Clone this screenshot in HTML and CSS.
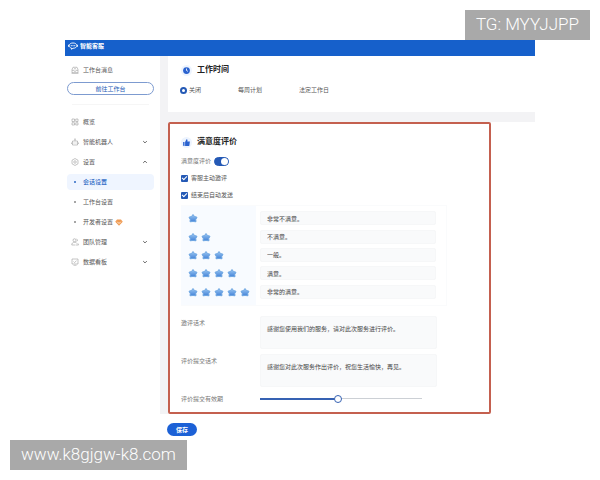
FILE: index.html
```html
<!DOCTYPE html>
<html lang="zh-CN">
<head>
    <meta charset="UTF-8">
    <meta name="viewport" content="width=device-width, initial-scale=1.0">
    <title>智能客服</title>
    <link rel="stylesheet" href="styles.css">
</head>
<body>
    <!-- shared icons -->
    <svg class="defs" width="0" height="0" aria-hidden="true">
        <defs>
            <linearGradient id="starFill" x1="0" y1="0" x2="0" y2="1">
                <stop offset="0" stop-color="#9cc8f3"/>
                <stop offset="1" stop-color="#4483d8"/>
            </linearGradient>
            <symbol id="star" viewBox="0 0 20 20">
                <path d="M10 3l3 4 5 1.500-2.500 4.500.500 4.500-6-.500-6 .500.500-4.500L2 8.500 7 7z" fill="url(#starFill)" stroke="#6ea6e2" stroke-width="2" stroke-linejoin="round"/>
            </symbol>
            <symbol id="down" viewBox="0 0 10 10">
                <path d="M2 3.500l3 3 3-3" fill="none" stroke="#555" stroke-width="1.500"/>
            </symbol>
        </defs>
    </svg>

    <div class="tag tag-top">TG: MYYJJPP</div>
    <div class="tag tag-bottom">www.k8gjgw-k8.com</div>

    <div class="app">
        <header class="topbar">
            <svg class="logo" viewBox="0 0 20 16"><path d="M10 2c4.500 0 7.500 2 7.500 5.300S14.500 12.500 10 12.500l-3 2v-2.300C4 11.500 2.500 9.800 2.500 7.300 2.500 4 5.500 2 10 2z" fill="none" stroke="#fff" stroke-width="1.800"/><path d="M1 5.500v4M19 5.500v4" stroke="#fff" stroke-width="1.800"/><circle cx="6.500" cy="7.300" r="1.100" fill="#fff"/><circle cx="10" cy="7.300" r="1.100" fill="#fff"/><circle cx="13.500" cy="7.300" r="1.100" fill="#fff"/></svg>
            <span>智能客服</span>
        </header>

        <div class="body">
            <!-- SIDEBAR -->
            <nav class="sidebar">
                <a class="item" href="#">
                    <svg class="icon" viewBox="0 0 16 16"><path d="M2 7l2-4.500h8L14 7v6.500H2zM2 8.500h3.500l1 2h3l1-2H14M6 5.500h4M1 14.500h14"/></svg>
                    <span>工作台消息</span>
                </a>
                <button class="go" type="button">前往工作台</button>
                <hr>
                <a class="item" href="#">
                    <svg class="icon" viewBox="0 0 16 16"><path d="M2 2h5v5H2zM9.500 2h4.500v5H9.500zM2 9.500h5V14H2zM9.500 9.500h4.500V14H9.500z"/></svg>
                    <span>概览</span>
                </a>
                <a class="item" href="#">
                    <svg class="icon" viewBox="0 0 16 16"><path d="M3 6h10v8H3zM8 6V2M6.500 2h3M1 9v3M15 9v3M6 9v2M10 9v2"/></svg>
                    <span>智能机器人</span>
                    <svg class="arrow"><use href="#down"/></svg>
                </a>
                <a class="item" href="#">
                    <svg class="icon" viewBox="0 0 16 16"><path d="M8 1l6 3.500v7L8 15l-6-3.500v-7z"/><circle cx="8" cy="8" r="2.500"/></svg>
                    <span>设置</span>
                    <svg class="arrow up"><use href="#down"/></svg>
                </a>
                <a class="item sub active" href="#"><span>会话设置</span></a>
                <a class="item sub" href="#"><span>工作台设置</span></a>
                <a class="item sub" href="#">
                    <span>开发者设置</span>
                    <svg class="gem" viewBox="0 0 16 14"><path d="M4 1h8l3.500 4.500L8 13.500.500 5.500z" fill="#ef9a52"/><path d="M4.500 5.500L8 9l3.500-3.500" fill="none" stroke="#fff" stroke-width="1.500"/></svg>
                </a>
                <a class="item" href="#">
                    <svg class="icon" viewBox="0 0 16 16"><circle cx="7" cy="4.500" r="3"/><path d="M1.500 14c0-3.500 2-5.500 5.500-5.500 2 0 3.500.800 4.500 2M1.500 14H9M11 2c2.500.500 2.500 4.500 0 5M10 14h5M13.500 10.500L15 14"/></svg>
                    <span>团队管理</span>
                    <svg class="arrow"><use href="#down"/></svg>
                </a>
                <a class="item" href="#">
                    <svg class="icon" viewBox="0 0 16 16"><path d="M2 2h12v10H2zM5 7l2 2 4-3.500M5 14.500h6"/></svg>
                    <span>数据看板</span>
                    <svg class="arrow"><use href="#down"/></svg>
                </a>
            </nav>

            <!-- SETTINGS -->
            <form class="content">
                <div class="panels">
                    <section class="card hours">
                        <h2>
                            <svg class="title-icon" viewBox="0 0 16 16"><circle cx="8" cy="8" r="6" fill="#2a62cf"/><path d="M8 4.500V8l2.500 1.500" fill="none" stroke="#fff" stroke-width="1.500"/></svg>
                            工作时间
                        </h2>
                        <div class="radios">
                            <label><input type="radio" name="hours" checked>关闭</label>
                            <label><input class="plain" type="radio" name="hours">每周计划</label>
                            <label><input class="plain" type="radio" name="hours">法定工作日</label>
                        </div>
                    </section>

                    <section class="card">
                        <div class="rating">
                            <h2>
                                <svg class="title-icon" viewBox="0 0 16 16"><path d="M2 7h2.500v7H2zM5.500 7L8 2c2 0 2 1.500 1.500 4H14l-1 8H5.500z" fill="#2a62cf"/></svg>
                                满意度评价
                            </h2>
                            <label class="line">满意度评价<input class="switch" type="checkbox" checked></label>
                            <label class="line dark"><input class="check" type="checkbox" checked>客服主动邀评</label>
                            <label class="line dark"><input class="check" type="checkbox" checked>结束后自动发送</label>

                            <div class="levels">
                                <div class="level">
                                    <div class="stars"><svg><use href="#star"/></svg></div>
                                    <input type="text" aria-label="一星" value="非常不满意。">
                                </div>
                                <div class="level">
                                    <div class="stars"><svg><use href="#star"/></svg><svg><use href="#star"/></svg></div>
                                    <input type="text" aria-label="二星" value="不满意。">
                                </div>
                                <div class="level">
                                    <div class="stars"><svg><use href="#star"/></svg><svg><use href="#star"/></svg><svg><use href="#star"/></svg></div>
                                    <input type="text" aria-label="三星" value="一般。">
                                </div>
                                <div class="level">
                                    <div class="stars"><svg><use href="#star"/></svg><svg><use href="#star"/></svg><svg><use href="#star"/></svg><svg><use href="#star"/></svg></div>
                                    <input type="text" aria-label="四星" value="满意。">
                                </div>
                                <div class="level">
                                    <div class="stars"><svg><use href="#star"/></svg><svg><use href="#star"/></svg><svg><use href="#star"/></svg><svg><use href="#star"/></svg><svg><use href="#star"/></svg></div>
                                    <input type="text" aria-label="五星" value="非常的满意。">
                                </div>
                            </div>

                            <div class="field">
                                <label for="invite">邀评话术</label>
                                <textarea id="invite">感谢您使用我们的服务，请对此次服务进行评价。</textarea>
                            </div>
                            <div class="field">
                                <label for="thanks">评价提交话术</label>
                                <textarea id="thanks">感谢您对此次服务作出评价，祝您生活愉快，再见。</textarea>
                            </div>
                            <div class="field">
                                <label for="expire">评价提交有效期</label>
                                <input id="expire" type="range" min="0" max="100" value="48">
                            </div>
                        </div>
                    </section>
                </div>
                <div class="actions">
                    <button class="save" type="button">保存</button>
                </div>
            </form>
        </div>
    </div>
</body>
</html>
```
FILE: styles.css
```css
* {
    box-sizing: border-box;
}
body {
    margin: 0;
    background: #fff;
    color: #555;
    font: 6px/12px "Liberation Sans", "Noto Sans CJK SC", sans-serif;
}
input, textarea, button {
    margin: 0;
    font: inherit;
    color: inherit;
}
svg {
    flex: none;
}
.defs {
    position: absolute;
}
.app {
    padding: 40px 65px 0;
}

/* contact tags over the page */
.tag {
    position: absolute;
    padding: 0 11px;
    background: #a9a9a9;
    color: #fff;
    font: 300 17px/28px Roboto, sans-serif;
    height: 30px;
}
.tag-top {
    top: 10px;
    right: 10px;
}
.tag-bottom {
    top: 440px;
    left: 10px;
}

.topbar {
    display: flex;
    align-items: center;
    gap: 2px;
    height: 16px;
    padding: 0 3px 4px;
    background: #1660cb;
    color: #fff;
    font-weight: bold;
}
.logo {
    width: 10px;
    height: 8px;
}
.body {
    display: flex;
}

/* sidebar */
.sidebar {
    width: 95px;
    padding: 6px 6px 0 2px;
}
.item {
    display: flex;
    align-items: center;
    height: 16px;
    margin-bottom: 4px;
    padding: 0 6px 0 4px;
    border-radius: 4px;
    color: #555;
    text-decoration: none;
}
.icon {
    width: 8px;
    height: 8px;
    margin-right: 4px;
    fill: none;
    stroke: #888;
    stroke-width: 1;
}
.arrow {
    width: 6px;
    height: 6px;
    margin-left: auto;
}
.up {
    transform: rotate(180deg);
}
.sub::before {
    content: "";
    width: 2px;
    height: 2px;
    margin: 0 7px 0 3px;
    border-radius: 1px;
    background: #888;
}
.active {
    background: #eff5ff;
    color: #2d68c4;
    font-weight: 500;
}
.active::before {
    background: #2d68c4;
}
.gem {
    width: 8px;
    height: 7px;
    margin-left: 2px;
}
.go {
    display: block;
    width: 100%;
    height: 13px;
    padding: 0;
    border: 1px solid #7d9bd0;
    border-radius: 7px;
    background: #fff;
    color: #2459b5;
    line-height: 10px;
}
hr {
    margin: 9px 5px;
    border: 0;
    border-top: 1px solid #f6f6f6;
}

/* settings */
.content {
    flex: 1;
    min-width: 0;
}
.panels {
    display: grid;
    gap: 10px;
    padding-left: 8px;
    background: #f3f3f5;
}
.card {
    background: #fff;
}
.hours {
    height: 56px;
    padding: 8px 13px;
}
h2 {
    display: flex;
    align-items: center;
    gap: 5px;
    margin: 0;
    color: #222;
    font-size: 8px;
    line-height: 12px;
}
.title-icon {
    width: 11px;
    height: 11px;
    padding: 1px;
    border-radius: 6px;
    background: #edf4fe;
}
.radios {
    display: flex;
    gap: 35px;
    margin-top: 8px;
}
.radios label {
    display: flex;
    align-items: center;
    gap: 2px;
}
.radios input {
    appearance: none;
    width: 7px;
    height: 7px;
    margin-left: -1px;
    border: 2px solid #2459b5;
    border-radius: 50%;
}
.radios .plain {
    width: 0;
    margin: 0;
    border: 0;
}
.rating {
    margin-right: 44px;
    padding: 12px 42px 6px 11px;
    border: 2px solid #c4604f;
    border-radius: 2px;
}
.line {
    display: flex;
    align-items: center;
    width: max-content;
    margin-top: 5px;
    color: #777;
}
h2 + .line {
    margin: 7px 0 4px;
}
.dark {
    gap: 3px;
    color: #555;
}
.switch {
    appearance: none;
    display: flex;
    justify-content: flex-end;
    width: 15px;
    height: 9px;
    margin-left: 3px;
    border: 1px solid #2459b5;
    border-radius: 5px;
    background: #2459b5;
}
.switch::before {
    content: "";
    width: 7px;
    height: 7px;
    border-radius: 50%;
    background: #fff;
}
.check {
    appearance: none;
    display: grid;
    place-items: center;
    width: 7px;
    height: 7px;
    border-radius: 1px;
    background: #2459b5;
}
.check::before {
    content: "";
    width: 4px;
    height: 2px;
    margin-bottom: 1px;
    border: solid #fff;
    border-width: 0 0 1px 1px;
    transform: rotate(-45deg);
}
.levels {
    display: grid;
    grid-template-rows: repeat(5, 1fr);
    height: 101px;
    margin: 4px 0 10px;
    padding: 3px 10px 4px 0;
    border: 1px solid #fafbfc;
    border-left: 0;
    background: linear-gradient(90deg, #f8fbff 75px, #fff 75px);
}
.level, .field {
    display: grid;
    grid-template-columns: 79px 1fr;
}
.level {
    align-items: center;
}
.stars {
    display: flex;
    gap: 3px;
    padding-left: 7px;
}
.stars svg {
    width: 10px;
    height: 10px;
}
.level input, textarea {
    width: 100%;
    min-width: 0;
    border: 1px solid #f6f7f8;
    border-radius: 2px;
    background: #f9fafb;
    color: #444;
}
.level input {
    height: 14px;
    padding: 0 6px;
}
.field {
    margin: 0 10px 5px 0;
    color: #777;
}
.field label {
    line-height: 14px;
}
textarea {
    display: block;
    height: 33px;
    padding: 7px 6px;
    line-height: 10px;
    resize: none;
}
.field:last-child {
    align-items: center;
    margin: 0 25px 0 0;
}
input[type="range"] {
    appearance: none;
    width: 100%;
    height: 8px;
    background: linear-gradient(#3662b3, #3662b3) 0 3px / 48% 2px no-repeat,
        linear-gradient(#ccd0d5, #ccd0d5) 0 3px / 100% 1px no-repeat;
}
input[type="range"]::-webkit-slider-thumb {
    appearance: none;
    width: 8px;
    height: 8px;
    border: 1px solid #3662b3;
    border-radius: 50%;
    background: #fff;
}
.actions {
    padding: 9px 7px;
}
.save {
    display: block;
    width: 30px;
    height: 13px;
    padding: 0;
    border: 0;
    border-radius: 7px;
    background: #1c61d6;
    color: #fff;
    font-weight: bold;
}
```
